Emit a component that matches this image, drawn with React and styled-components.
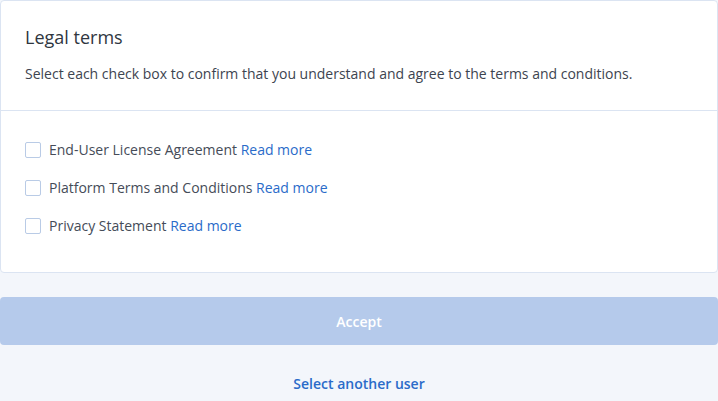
import React from "react";
import styled, { createGlobalStyle } from "styled-components";

const GlobalStyle = createGlobalStyle`
  body {
    margin: 0;
    background: #f3f6fb;
    font-family: "Open Sans", "Noto Sans", sans-serif;
  }
`;

const terms = [
  "End-User License Agreement",
  "Platform Terms and Conditions",
  "Privacy Statement",
];

const App = () => {
  return (
    <Page>
      <GlobalStyle />
      <Card>
        <Header>
          <Title>Legal terms</Title>
          <Description>
            Select each check box to confirm that you understand and agree to
            the terms and conditions.
          </Description>
        </Header>
        <TermsList>
          {terms.map((t) => (
            <Term key={t}>
              <Box type="checkbox" />
              <Label>
                {t} <Link href="#">Read more</Link>
              </Label>
            </Term>
          ))}
        </TermsList>
      </Card>
      <AcceptButton disabled>Accept</AcceptButton>
      <Footer>
        <FooterLink href="#">Select another user</FooterLink>
      </Footer>
    </Page>
  );
};

export default App;

const Page = styled.div`
  width: 718px;
  display: flex;
  flex-direction: column;
`;

const Card = styled.section`
  background: #fff;
  border: 1px solid #dbe4f2;
  border-radius: 4px;
  box-sizing: border-box;
`;

const Header = styled.div`
  padding: 23px 24px 24px;
  border-bottom: 1px solid #dbe4f2;
`;

const Title = styled.h2`
  margin: 0 0 12px;
  font-size: 18px;
  line-height: 26px;
  font-weight: 400;
  color: #2f3640;
`;

const Description = styled.p`
  margin: 0;
  font-size: 14px;
  line-height: 24px;
  color: #3d4450;
`;

const TermsList = styled.div`
  display: flex;
  flex-direction: column;
  gap: 16px;
  padding: 28px 24px 35px;
`;

const Term = styled.label`
  display: flex;
  align-items: center;
  gap: 8px;
  height: 22px;
`;

const Box = styled.input`
  appearance: none;
  margin: 0;
  width: 16px;
  height: 16px;
  border: 1px solid #b9cbe6;
  border-radius: 2px;
  background: #fff;
  box-sizing: border-box;
`;

const Label = styled.span`
  font-size: 14px;
  line-height: 22px;
  color: #454c58;
`;

const Link = styled.a`
  color: #2a6bc9;
  text-decoration: none;
`;

const AcceptButton = styled.button`
  margin-top: 24px;
  height: 48px;
  border: none;
  border-radius: 4px;
  background: #b5caeb;
  color: #fff;
  font-family: "Open Sans", "Noto Sans", sans-serif;
  font-size: 14px;
  font-weight: 600;
`;

const Footer = styled.div`
  display: flex;
  justify-content: center;
  margin-top: 29px;
`;

const FooterLink = styled.a`
  font-size: 14px;
  line-height: 20px;
  font-weight: 600;
  color: #2a6bc9;
  text-decoration: none;
`;
